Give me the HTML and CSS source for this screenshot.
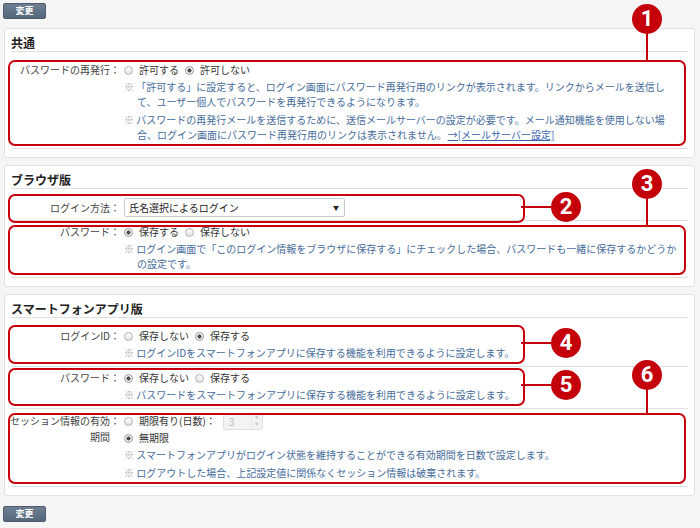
FILE: index.html
```html
<!DOCTYPE html>
<html lang="ja">
<head>
    <meta charset="UTF-8">
    <meta name="viewport" content="width=device-width, initial-scale=1.0">
    <title>ログイン設定</title>
    <link rel="stylesheet" href="styles.css">
</head>
<body>

<button class="btn" type="button">変更</button>

<!-- 共通 -->
<section class="panel">
    <h2 class="panel-title">共通</h2>
    <div class="row">
        <div class="label">パスワードの再発行</div>
        <div class="colon">：</div>
        <div class="field">
            <div class="opts">
                <span class="opt"><span class="radio"></span>許可する</span>
                <span class="opt"><span class="radio on"></span>許可しない</span>
            </div>
            <p class="note first"><span class="kome">※</span> 「許可する」に設定すると、ログイン画面にパスワード再発行用のリンクが表示されます。リンクからメールを送信して、ユーザー個人でパスワードを再発行できるようになります。</p>
            <p class="note"><span class="kome">※</span> パスワードの再発行メールを送信するために、送信メールサーバーの設定が必要です。メール通知機能を使用しない場合、ログイン画面にパスワード再発行用のリンクは表示されません。<a href="#">→[メールサーバー設定]</a></p>
        </div>
        <span class="mark"><span class="badge badge-top">1</span></span>
    </div>
</section>

<!-- ブラウザ版 -->
<section class="panel">
    <h2 class="panel-title">ブラウザ版</h2>
    <div class="row row-select">
        <div class="label">ログイン方法</div>
        <div class="colon">：</div>
        <div class="field">
            <div class="select">
                <span>氏名選択によるログイン</span>
                <span class="caret">▼</span>
            </div>
        </div>
        <span class="mark mark-short mark-select"><span class="badge badge-side">2</span></span>
    </div>
    <div class="row">
        <div class="label">パスワード</div>
        <div class="colon">：</div>
        <div class="field">
            <div class="opts">
                <span class="opt"><span class="radio on"></span>保存する</span>
                <span class="opt"><span class="radio"></span>保存しない</span>
            </div>
            <p class="note first"><span class="kome">※</span> ログイン画面で「このログイン情報をブラウザに保存する」にチェックした場合、パスワードも一緒に保存するかどうかの設定です。</p>
        </div>
        <span class="mark mark-low"><span class="badge badge-top">3</span></span>
    </div>
</section>

<!-- スマートフォンアプリ版 -->
<section class="panel">
    <h2 class="panel-title">スマートフォンアプリ版</h2>
    <div class="row">
        <div class="label">ログインID</div>
        <div class="colon">：</div>
        <div class="field">
            <div class="opts">
                <span class="opt"><span class="radio"></span>保存しない</span>
                <span class="opt"><span class="radio on"></span>保存する</span>
            </div>
            <p class="note first"><span class="kome">※</span> ログインIDをスマートフォンアプリに保存する機能を利用できるように設定します。</p>
        </div>
        <span class="mark mark-short mark-high"><span class="badge badge-side">4</span></span>
    </div>
    <div class="row">
        <div class="label">パスワード</div>
        <div class="colon">：</div>
        <div class="field">
            <div class="opts">
                <span class="opt"><span class="radio on"></span>保存しない</span>
                <span class="opt"><span class="radio"></span>保存する</span>
            </div>
            <p class="note first"><span class="kome">※</span> パスワードをスマートフォンアプリに保存する機能を利用できるように設定します。</p>
        </div>
        <span class="mark mark-short"><span class="badge badge-side">5</span></span>
    </div>
    <div class="row">
        <div class="label label-wrap">セッション情報の有効期間</div>
        <div class="colon colon-wrap">：</div>
        <div class="field">
            <div class="opts opts-tall">
                <span class="opt"><span class="radio"></span>期限有り(日数)：</span>
                <span class="num">
                    <span class="num-val">3</span>
                    <span class="spin"><span>▲</span><span>▼</span></span>
                </span>
            </div>
            <div class="opts">
                <span class="opt"><span class="radio on"></span>無期限</span>
            </div>
            <p class="note first"><span class="kome">※</span> スマートフォンアプリがログイン状態を維持することができる有効期間を日数で設定します。</p>
            <p class="note"><span class="kome">※</span> ログアウトした場合、上記設定値に関係なくセッション情報は破棄されます。</p>
        </div>
        <span class="mark mark-low"><span class="badge badge-top badge-near">6</span></span>
    </div>
</section>

<button class="btn btn-bottom" type="button">変更</button>

</body>
</html>
```

FILE: styles.css
```css
body {
    margin: 0;
    padding: 3px 5px 0 4px;
    background-color: #f5f5f5;
    font-family: "Noto Sans CJK JP", "Noto Sans", sans-serif;
    font-size: 10px;
    line-height: 16px;
    color: #333;
    text-spacing-trim: space-all;
}

.btn {
    display: block;
    width: 43px;
    height: 16px;
    margin: 0 0 9px -1px;
    padding: 0;
    border: 1px solid #4d5b6c;
    border-radius: 2px;
    background: linear-gradient(#6e7e93, #56667b);
    color: #fff;
    font-family: inherit;
    font-size: 9px;
    font-weight: bold;
    line-height: 14px;
}

.btn-bottom {
    margin: 10px 0 0 -1px;
}

.panel {
    background-color: #fff;
    border: 1px solid #e2e2e2;
    border-radius: 3px;
    padding: 5px 6px 8px 6px;
    margin-bottom: 7px;
}

.panel-title {
    margin: 0 0 7px;
    font-size: 12px;
    font-weight: bold;
    line-height: 17px;
    color: #222;
    border-bottom: 1px solid #e0e0e0;
}

.row {
    position: relative;
    display: flex;
    align-items: flex-start;
    padding: 3px 0 6px;
    border-bottom: 1px solid #e0e0e0;
}

.row-select {
    align-items: center;
    padding-bottom: 3px;
}

.label {
    width: 100px;
    margin-left: -1px;
    text-align: right;
    color: #444;
}

.label-wrap {
    padding-top: 1px;
    line-height: 16px;
}

.colon {
    width: 10px;
    color: #444;
}

.colon-wrap {
    padding-top: 1px;
}

.field {
    flex: 1;
    margin-left: 4px;
    padding-right: 8px;
}

/* ラジオボタン */
.opts {
    display: flex;
    align-items: center;
    gap: 6px;
    height: 16px;
}

.opts-tall {
    height: 18px;
}

.opt {
    display: flex;
    align-items: center;
    gap: 6px;
    color: #333;
}

.radio {
    display: inline-block;
    width: 9px;
    height: 9px;
    box-sizing: border-box;
    border: 1px solid #b3b3b3;
    border-radius: 50%;
    background: linear-gradient(#fdfdfd, #e2e2e2);
}

.radio.on {
    background: radial-gradient(circle, #4a4a4a 0 1.8px, #f2f2f2 2.3px);
    border-color: #9a9a9a;
}

.note {
    margin: 3px 0 0;
    padding-left: 13px;
    text-indent: -13px;
    line-height: 15px;
    color: #466b9a;
}

.note.first {
    margin-top: 1px;
}

.kome {
    color: #a0a0a0;
}

.note a {
    margin-left: 1px;
    color: #3a63b2;
}

/* セレクト */
.select {
    display: flex;
    align-items: center;
    justify-content: space-between;
    width: 221px;
    height: 19px;
    box-sizing: border-box;
    margin-top: -1px;
    padding: 0 5px 0 4px;
    border: 1px solid #cacaca;
    border-radius: 2px;
    color: #222;
}

.caret {
    font-size: 6px;
    color: #222;
}

/* 日数入力 */
.num {
    display: flex;
    width: 40px;
    height: 17px;
    box-sizing: border-box;
    margin-left: 1px;
    border: 1px solid #e0e0e0;
    border-radius: 2px;
    background-color: #f3f3f3;
}

.num-val {
    flex: 1;
    padding-left: 5px;
    line-height: 15px;
    color: #bbb;
}

.spin {
    display: flex;
    flex-direction: column;
    justify-content: center;
    align-items: center;
    width: 10px;
    border-left: 1px solid #e6e6e6;
    font-size: 4px;
    line-height: 7px;
    color: #c8c8c8;
}

/* 注釈の赤枠 */
.mark {
    position: absolute;
    top: 1px;
    bottom: 2px;
    left: -3px;
    right: 2px;
    border: 2px solid #c8000c;
    border-radius: 7px;
}

.mark-short {
    right: auto;
    width: 517px;
    box-sizing: border-box;
}

.mark-select {
    top: -2px;
    bottom: -3px;
}

.mark-low {
    top: 4px;
}

.mark-high {
    top: 0;
}

.badge {
    position: absolute;
    width: 30px;
    height: 30px;
    border-radius: 50%;
    background-color: #c4000a;
    color: #fff;
    font-family: Roboto, "Liberation Sans", sans-serif;
    font-size: 22px;
    font-weight: bold;
    line-height: 30px;
    text-align: center;
}

.badge::after {
    content: '';
    position: absolute;
    background-color: #c4000a;
}

.badge-top {
    right: 22px;
    top: -58px;
}

.badge-top::after {
    left: 14px;
    top: 29px;
    width: 2px;
    height: 29px;
}

.badge-near {
    top: -55px;
}

.badge-near::after {
    height: 26px;
}

.badge-side {
    left: calc(100% + 28px);
    top: calc(50% - 17px);
}

.badge-side::after {
    right: 100%;
    top: 14px;
    width: 30px;
    height: 2px;
}
```
